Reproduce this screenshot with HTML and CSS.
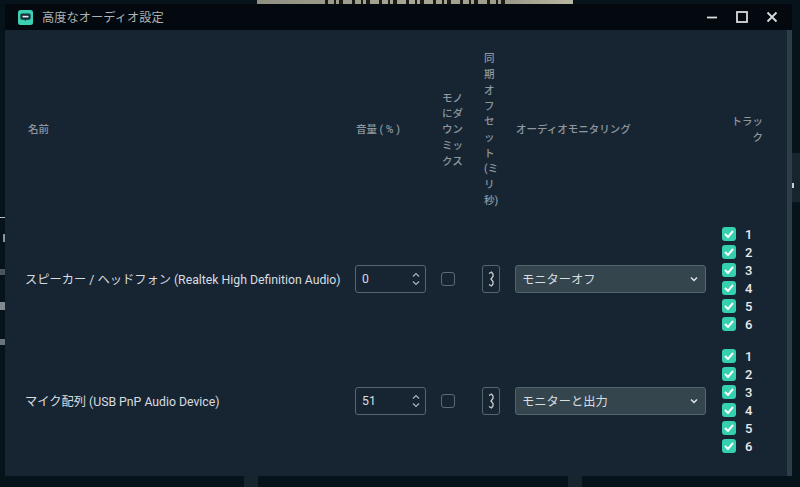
FILE: index.html
```html
<!DOCTYPE html>
<html lang="ja">
  <head>
    <meta charset="UTF-8" />
    <title>高度なオーディオ設定</title>
    <link rel="stylesheet" href="styles.css">
  </head>
  <body>
    <!-- Editor window showing behind the dialog -->
    <div class="backdrop">
      <div class="preview"><div class="preview-caption"></div></div>
      <div class="left-bits">
        <span class="bit bit-line"></span>
        <span class="bit bit-slash"></span>
        <span class="bit bit-grey-a"></span>
        <span class="bit bit-glyph"></span>
        <span class="bit bit-grey-b"></span>
      </div>
      <div class="side-right"><span class="pill"></span></div>
      <div class="dock dock-a"></div>
      <div class="dock dock-b"></div>
    </div>

    <div class="window">
      <header class="titlebar">
        <svg class="app-icon" width="15" height="15" viewBox="0 0 15 15">
          <rect width="15" height="15" rx="2.5" fill="#3ccfb3"/>
          <path d="M4 3.5h7a1.6 1.6 0 0 1 1.6 1.6v3a1.6 1.6 0 0 1-1.6 1.6H8.5l-1 1.4-1-1.4H4a1.6 1.6 0 0 1-1.6-1.6v-3A1.6 1.6 0 0 1 4 3.5z" fill="#17303a"/>
          <path d="M4.5 5.8h6v1.6h-6z" fill="#e4f3ef"/>
        </svg>
        <span class="title">高度なオーディオ設定</span>
        <div class="win-buttons">
          <svg width="12" height="12" viewBox="0 0 12 12"><path d="M1 6.5h10" stroke="#d8dcde" stroke-width="1.8"/></svg>
          <svg width="12" height="12" viewBox="0 0 12 12"><rect x="1" y="1" width="10" height="10" fill="none" stroke="#d8dcde" stroke-width="1.8"/></svg>
          <svg width="12" height="12" viewBox="0 0 12 12"><path d="M1.500 1.500l9 9M10.500 1.500l-9 9" stroke="#d8dcde" stroke-width="1.8"/></svg>
        </div>
      </header>

      <div class="content">
        <!-- Column headings -->
        <div class="row head-row">
          <div class="col-name">名前</div>
          <div class="col-volume">音量 ( % )</div>
          <div class="col-mono">モノにダウンミックス</div>
          <div class="col-offset">同期オフセット(ミリ秒)</div>
          <div class="col-monitor">オーディオモニタリング</div>
          <div class="col-tracks">トラック</div>
        </div>

        <!-- Speakers -->
        <div class="row source-row">
          <div class="col-name source-name">スピーカー / ヘッドフォン (Realtek High Definition Audio)</div>
          <div class="col-volume">
            <div class="number-input">
              <span>0</span>
              <svg width="8" height="20" viewBox="0 0 8 20"><path d="M1 7.500l3-3 3 3M1 12.500l3 3 3-3" fill="none" stroke="#aab4ba" stroke-width="1.200"/></svg>
            </div>
          </div>
          <div class="col-mono"><span class="checkbox"></span></div>
          <div class="col-offset">
            <div class="offset-input">
              <svg width="8" height="16" viewBox="0 0 8 16"><path d="M2 2.500l2.500-1.500 1.500 2v2.500l-2 2.500 2 2.500v2.500l-1.500 2-2.500-1.500" fill="none" stroke="#c8ced1" stroke-width="1.300"/></svg>
            </div>
          </div>
          <div class="col-monitor">
            <div class="select">
              <span>モニターオフ</span>
              <svg width="8" height="6" viewBox="0 0 8 6"><path d="M1 1.500l3 3 3-3" fill="none" stroke="#e2e6e8" stroke-width="1.500"/></svg>
            </div>
          </div>
          <div class="col-tracks track-list">
            <label class="track"><span class="check"><svg width="10" height="8" viewBox="0 0 10 8"><path d="M1 4l3 3 5-6" fill="none" stroke="#fff" stroke-width="2"/></svg></span>1</label>
            <label class="track"><span class="check"><svg width="10" height="8" viewBox="0 0 10 8"><path d="M1 4l3 3 5-6" fill="none" stroke="#fff" stroke-width="2"/></svg></span>2</label>
            <label class="track"><span class="check"><svg width="10" height="8" viewBox="0 0 10 8"><path d="M1 4l3 3 5-6" fill="none" stroke="#fff" stroke-width="2"/></svg></span>3</label>
            <label class="track"><span class="check"><svg width="10" height="8" viewBox="0 0 10 8"><path d="M1 4l3 3 5-6" fill="none" stroke="#fff" stroke-width="2"/></svg></span>4</label>
            <label class="track"><span class="check"><svg width="10" height="8" viewBox="0 0 10 8"><path d="M1 4l3 3 5-6" fill="none" stroke="#fff" stroke-width="2"/></svg></span>5</label>
            <label class="track"><span class="check"><svg width="10" height="8" viewBox="0 0 10 8"><path d="M1 4l3 3 5-6" fill="none" stroke="#fff" stroke-width="2"/></svg></span>6</label>
          </div>
        </div>

        <!-- Microphone -->
        <div class="row source-row">
          <div class="col-name source-name">マイク配列 (USB PnP Audio Device)</div>
          <div class="col-volume">
            <div class="number-input">
              <span>51</span>
              <svg width="8" height="20" viewBox="0 0 8 20"><path d="M1 7.500l3-3 3 3M1 12.500l3 3 3-3" fill="none" stroke="#aab4ba" stroke-width="1.200"/></svg>
            </div>
          </div>
          <div class="col-mono"><span class="checkbox"></span></div>
          <div class="col-offset">
            <div class="offset-input">
              <svg width="8" height="16" viewBox="0 0 8 16"><path d="M2 2.500l2.500-1.500 1.500 2v2.500l-2 2.500 2 2.500v2.500l-1.500 2-2.500-1.500" fill="none" stroke="#c8ced1" stroke-width="1.300"/></svg>
            </div>
          </div>
          <div class="col-monitor">
            <div class="select">
              <span>モニターと出力</span>
              <svg width="8" height="6" viewBox="0 0 8 6"><path d="M1 1.500l3 3 3-3" fill="none" stroke="#e2e6e8" stroke-width="1.500"/></svg>
            </div>
          </div>
          <div class="col-tracks track-list">
            <label class="track"><span class="check"><svg width="10" height="8" viewBox="0 0 10 8"><path d="M1 4l3 3 5-6" fill="none" stroke="#fff" stroke-width="2"/></svg></span>1</label>
            <label class="track"><span class="check"><svg width="10" height="8" viewBox="0 0 10 8"><path d="M1 4l3 3 5-6" fill="none" stroke="#fff" stroke-width="2"/></svg></span>2</label>
            <label class="track"><span class="check"><svg width="10" height="8" viewBox="0 0 10 8"><path d="M1 4l3 3 5-6" fill="none" stroke="#fff" stroke-width="2"/></svg></span>3</label>
            <label class="track"><span class="check"><svg width="10" height="8" viewBox="0 0 10 8"><path d="M1 4l3 3 5-6" fill="none" stroke="#fff" stroke-width="2"/></svg></span>4</label>
            <label class="track"><span class="check"><svg width="10" height="8" viewBox="0 0 10 8"><path d="M1 4l3 3 5-6" fill="none" stroke="#fff" stroke-width="2"/></svg></span>5</label>
            <label class="track"><span class="check"><svg width="10" height="8" viewBox="0 0 10 8"><path d="M1 4l3 3 5-6" fill="none" stroke="#fff" stroke-width="2"/></svg></span>6</label>
          </div>
        </div>
      </div>
    </div>
  </body>
</html>
```

FILE: styles.css
```css
/* Global Styles */
* {
  box-sizing: border-box;
}
html, body {
  height: 100%;
}
body {
  margin: 0;
  position: relative;
  overflow: hidden;
  background: #06131b;
  font-family: "Roboto", "Noto Sans CJK JP", sans-serif;
  color: #d8dde0;
}
/* Window behind the dialog */
.backdrop {
  position: absolute;
  inset: 0;
}
.preview {
  position: absolute;
  left: 257px;
  top: 0;
  width: 316px;
  height: 4px;
  background: linear-gradient(90deg, #8f9082, #a8a795 50%, #9c9b89 80%, #b8b7a3);
}
.preview-caption {
  margin-left: 68px;
  width: 180px;
  height: 4px;
  background: repeating-linear-gradient(90deg, #1a1a16 0 3px, transparent 3px 9px, #1a1a16 9px 11px, transparent 11px 14px, #1a1a16 14px 18px, transparent 18px 27px);
}
.left-bits {
  position: absolute;
  left: 0;
  top: 0;
  width: 5px;
  height: 100%;
}
.bit {
  position: absolute;
  left: 0;
}
.bit-line {
  top: 217px;
  width: 5px;
  height: 1px;
  background: #b9c0c3;
}
.bit-slash {
  top: 234px;
  left: 3px;
  width: 2px;
  height: 8px;
  background: #8b9499;
}
.bit-grey-a {
  top: 269px;
  width: 5px;
  height: 6px;
  background: #4a565c;
}
.bit-glyph {
  top: 302px;
  width: 5px;
  height: 8px;
  background: #7f898e;
}
.bit-grey-b {
  top: 339px;
  width: 5px;
  height: 6px;
  background: #69757a;
}
.side-right {
  position: absolute;
  right: 0;
  top: 153px;
  width: 8px;
  height: 50px;
  background: #17252f;
  border-bottom: 1px solid #0b161d;
}
.pill {
  position: absolute;
  left: 0;
  top: 30px;
  width: 2px;
  height: 5px;
  background: #c9cfd1;
}
.dock {
  position: absolute;
  bottom: 0;
  width: 14px;
  height: 11px;
  background: #17252f;
}
.dock-a {
  left: 244px;
}
.dock-b {
  left: 568px;
}
/* Dialog */
.window {
  position: absolute;
  left: 5px;
  top: 4px;
  width: 787px;
  height: 472px;
  display: flex;
  flex-direction: column;
  background: #172533;
}
.titlebar {
  flex: none;
  height: 26px;
  display: flex;
  align-items: center;
  padding: 0 14px 0 13px;
  background: #03090f;
}
.app-icon {
  margin-right: 9px;
}
.title {
  font-size: 12.25px;
  color: #adb2b5;
  padding-bottom: 1px;
}
.win-buttons {
  margin-left: auto;
  display: flex;
  gap: 18px;
}
/* Table */
.content {
  flex: 1;
  border-right: 5px solid #2d3e48;
  padding-left: 20px;
}
.row {
  display: flex;
  align-items: center;
}
.col-name {
  width: 330px;
  flex: none;
}
.col-volume {
  width: 86px;
  flex: none;
}
.col-mono {
  width: 41px;
  flex: none;
}
.col-offset {
  width: 33px;
  flex: none;
}
.col-monitor {
  width: 206px;
  flex: none;
}
.col-tracks {
  width: 60px;
  flex: none;
}
.head-row {
  height: 188px;
  padding-top: 12px;
  font-size: 10.5px;
  font-weight: 500;
  line-height: 15.7px;
  color: #8d979e;
}
.head-row .col-name {
  padding-left: 3px;
}
.head-row .col-volume {
  padding-left: 1px;
}
.head-row .col-mono {
  padding: 0 13px 0 1px;
}
.head-row .col-offset {
  padding: 0 13px 0 2px;
}
.head-row .col-monitor {
  padding-left: 1px;
}
.head-row .col-tracks {
  text-align: right;
  padding: 0 18px 0 6px;
}
.source-row {
  height: 122px;
}
.source-name {
  font-size: 12.25px;
  color: #d8dde0;
}
/* Form controls */
.number-input {
  width: 71px;
  height: 28px;
  display: flex;
  align-items: center;
  justify-content: space-between;
  padding: 0 5px 0 6px;
  border: 1px solid #566670;
  border-radius: 3px;
  font-size: 12.25px;
}
.checkbox {
  display: block;
  width: 14px;
  height: 14px;
  border: 1px solid #5c6a73;
  border-radius: 3px;
}
.offset-input {
  width: 18px;
  height: 28px;
  display: flex;
  align-items: center;
  justify-content: center;
  border: 1px solid #566670;
  border-radius: 3px;
}
.select {
  width: 191px;
  height: 28px;
  display: flex;
  align-items: center;
  justify-content: space-between;
  padding: 0 7px 0 6px;
  background: #34454e;
  border: 1px solid #546570;
  border-radius: 3px;
  font-size: 12.25px;
}
.track-list {
  display: flex;
  flex-direction: column;
  gap: 4px;
  padding-left: 1px;
}
.track {
  display: flex;
  align-items: center;
  gap: 9px;
  height: 14px;
  font-size: 13px;
  font-weight: 500;
  color: #e8eaeb;
}
.check {
  width: 14px;
  height: 14px;
  display: flex;
  align-items: center;
  justify-content: center;
  background: #35d0b0;
  border-radius: 3px;
}
```
